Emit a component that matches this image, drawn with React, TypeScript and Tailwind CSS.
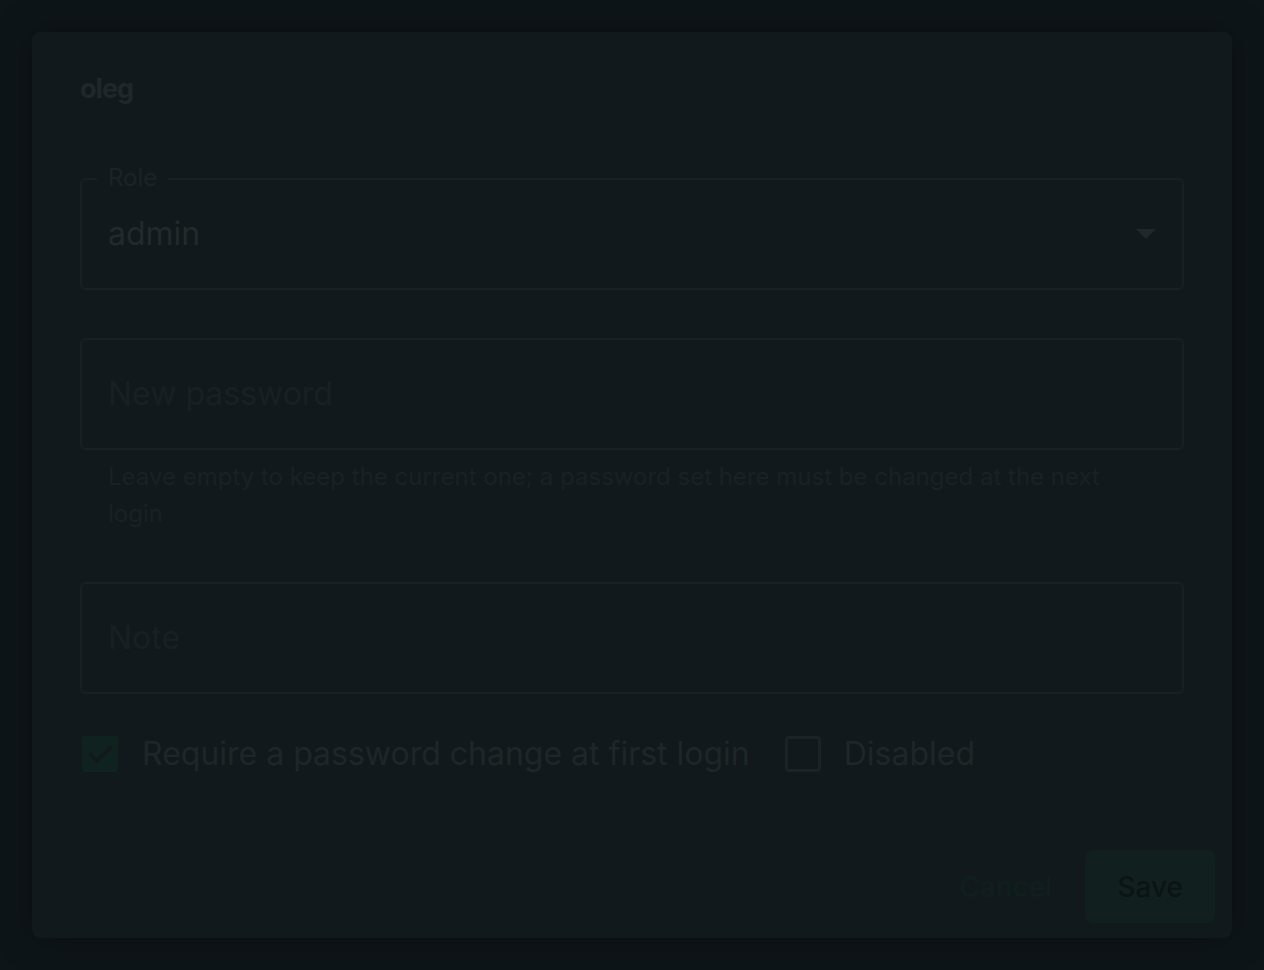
import React from "react";

const fieldBox = "relative h-[112px] rounded-[6px] border-2 border-[#172023] flex items-center pl-[26px] pr-[26px]";

function CheckMark() {
  return (
    <svg viewBox="0 0 24 24" className="w-[30px] h-[30px]" fill="none">
      <path d="M4.5 12.5l5 5L20 7" stroke="#111a1b" strokeWidth="3" strokeLinecap="square" />
    </svg>
  );
}

const EditUserDialog: React.FC = () => {
  return (
    <div className="min-h-screen w-full bg-[#0e1518] p-8 font-['Inter','Noto_Sans',sans-serif]">
      <div className="h-[906px] rounded-[8px] bg-[#12191c] shadow-[0_0_36px_rgba(0,0,0,0.35)] flex flex-col">
        {/* Title */}
        <div className="px-12 pt-[41px] h-[146px]">
          <h2 className="text-[27px] leading-[32px] font-bold tracking-[-1px] text-[#20272a]">oleg</h2>
        </div>

        {/* Form */}
        <div className="px-12 flex flex-col">
          <div className={fieldBox}>
            <span className="absolute -top-[17px] left-[15px] px-[11px] bg-[#12191c] text-[24px] leading-[30px] text-[#1c2326]">
              Role
            </span>
            <span className="flex-1 text-[32px] leading-[40px] text-[#222a2d]">admin</span>
            <svg viewBox="0 0 20 10" className="w-[20px] h-[10px]">
              <path d="M0 0h20L10 10z" fill="#20282b" />
            </svg>
          </div>

          <div className={`${fieldBox} mt-[48px]`}>
            <span className="text-[32px] leading-[40px] text-[#182023]">New password</span>
          </div>
          <p className="mt-[8px] px-[28px] pr-[80px] text-[24px] leading-[37px] text-[#192124]">
            Leave empty to keep the current one; a password set here must be changed at the next login
          </p>

          <div className={`${fieldBox} mt-[50px]`}>
            <span className="text-[32px] leading-[40px] text-[#182023]">Note</span>
          </div>

          {/* Flags */}
          <div className="mt-[40px] flex items-center">
            <label className="flex items-center pl-[2px]">
              <span className="w-[36px] h-[36px] rounded-[4px] bg-[#10221f] flex items-center justify-center">
                <CheckMark />
              </span>
              <span className="ml-[24px] text-[32px] leading-[40px] text-[#1e2629]">
                Require a password change at first login
              </span>
            </label>
            <label className="ml-[35px] flex items-center">
              <span className="w-[36px] h-[36px] rounded-[4px] border-[3px] border-[#1b2326]" />
              <span className="ml-[23px] text-[32px] leading-[40px] text-[#1e2629]">Disabled</span>
            </label>
          </div>
        </div>

        {/* Actions */}
        <div className="mt-auto flex items-center justify-end pr-[17px] pb-[15px]">
          <button className="h-[73px] px-[33px] rounded-[8px] text-[28px] font-medium text-[#0f1f1e]">Cancel</button>
          <button className="h-[73px] px-[32px] rounded-[8px] bg-[#11201f] text-[28px] font-medium text-[#0b1315]">
            Save
          </button>
        </div>
      </div>
    </div>
  );
};

export default function App() {
  return <EditUserDialog />;
}
